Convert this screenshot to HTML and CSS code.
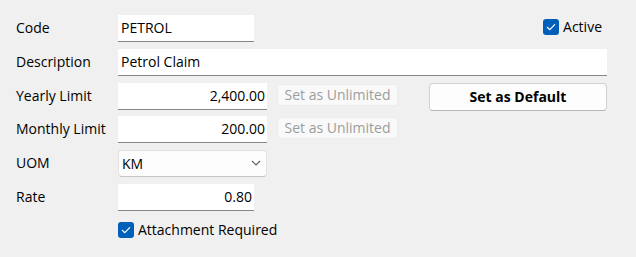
FILE: index.html
```html
<!DOCTYPE html>
<html>
<head>
<meta charset="utf-8">
<link rel="stylesheet" href="styles.css">
</head>
<body>
<div class="form">
  <div class="row">
    <span class="label">Code</span>
    <div class="field w136">PETROL</div>
    <label class="check active">
      <span class="box"><svg viewBox="0 0 16 16" width="16" height="16"><path d="M4.3 8.3 L6.8 10.7 L11.7 5.6" fill="none" stroke="#fff" stroke-width="1.2" stroke-linecap="round" stroke-linejoin="round"/></svg></span>
      <span class="ctext">Active</span>
    </label>
  </div>
  <div class="row">
    <span class="label">Description</span>
    <div class="field grow">Petrol Claim</div>
  </div>
  <div class="row">
    <span class="label">Yearly Limit</span>
    <div class="field w149 num">2,400.00</div>
    <button class="btn-unl">Set as Unlimited</button>
    <button class="btn-def">Set as Default</button>
  </div>
  <div class="row">
    <span class="label">Monthly Limit</span>
    <div class="field w149 num">200.00</div>
    <button class="btn-unl">Set as Unlimited</button>
  </div>
  <div class="row">
    <span class="label">UOM</span>
    <div class="combo">
      <span>KM</span>
      <svg viewBox="0 0 10 6" width="10" height="6"><path d="M1 1 L5 5 L9 1" fill="none" stroke="#5f5f5f" stroke-width="1.1"/></svg>
    </div>
  </div>
  <div class="row">
    <span class="label">Rate</span>
    <div class="field w136 num">0.80</div>
  </div>
  <div class="row last">
    <span class="label"></span>
    <label class="check">
      <span class="box"><svg viewBox="0 0 16 16" width="16" height="16"><path d="M4.3 8.3 L6.8 10.7 L11.7 5.6" fill="none" stroke="#fff" stroke-width="1.2" stroke-linecap="round" stroke-linejoin="round"/></svg></span>
      <span class="ctext">Attachment Required</span>
    </label>
  </div>
</div>
</body>
</html>
```

FILE: styles.css
```css
html, body {
  margin: 0;
  padding: 0;
  background: #f0f0f0;
  width: 636px;
  height: 257px;
  overflow: hidden;
}
body {
  font-family: "Open Sans", "Noto Sans", sans-serif;
  font-size: 14px;
  color: #000;
}
.form {
  display: flex;
  flex-direction: column;
  gap: 6.8px;
  padding: 15px 29px 0 16px;
}
.row {
  display: flex;
  align-items: center;
  height: 27px;
}
.row.last {
  height: 33px;
}
.label {
  width: 102px;
  flex: none;
  line-height: 20px;
  margin-top: -1px;
}
.field {
  box-sizing: border-box;
  height: 27px;
  background: #fff;
  border-bottom: 1px solid #868686;
  padding: 0 3px 1px;
  display: flex;
  align-items: center;
  color: #000;
}
.w136 { width: 136px; }
.w149 { width: 149px; }
.grow { flex: 1; }
.num { justify-content: flex-end; padding-right: 2px; }
.btn-unl {
  align-self: flex-start;
  margin: 1px 0 0 10px;
  height: 22px;
  width: 121px;
  box-sizing: border-box;
  border: 1px solid #ececec;
  border-radius: 3px;
  background: #f9f9f9;
  color: #9d9d9d;
  font: inherit;
  padding: 0 0 1px;
}
.btn-def {
  align-self: flex-start;
  margin-left: auto;
  height: 28px;
  width: 178px;
  box-sizing: border-box;
  border: 1px solid #d0d0d0;
  border-bottom-color: #b8b8b8;
  border-radius: 4px;
  background: #fdfdfd;
  color: #000;
  font: inherit;
  font-weight: 700;
  padding: 0 0 1px;
}
.combo {
  box-sizing: border-box;
  width: 149px;
  height: 27px;
  border: 1px solid #e2e2e2;
  border-bottom-color: #c4c4c4;
  border-radius: 4px;
  background: #fdfdfd;
  display: flex;
  align-items: center;
  justify-content: space-between;
  padding: 0 5px 1px 3px;
  color: #000;
}
.check {
  display: flex;
  align-items: flex-start;
  gap: 4px;
  color: #000;
}
.row.last .check {
  align-self: flex-start;
  margin-top: 4px;
}
.ctext {
  line-height: 16px;
}
.check.active {
  margin-left: auto;
  margin-right: 5px;
  align-self: flex-start;
  margin-top: 4px;
}
.box {
  width: 16px;
  height: 16px;
  border-radius: 3px;
  background: #005fb8;
  display: block;
  flex: none;
}
.box svg { display: block; }
```
